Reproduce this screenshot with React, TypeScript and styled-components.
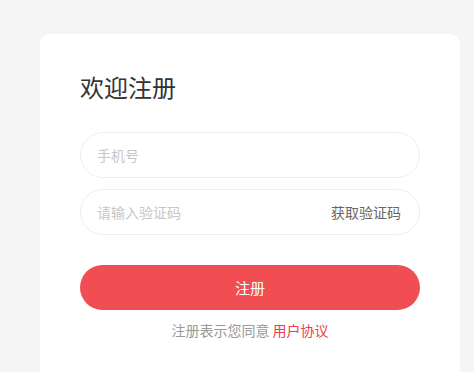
import React from "react";
import styled, { createGlobalStyle } from "styled-components";

const Global = createGlobalStyle`
  html, body {
    margin: 0;
    padding: 0;
    background: #f5f5f5;
    font-family: "Noto Sans CJK SC", "Noto Sans", sans-serif;
  }
  * { box-sizing: border-box; }
`;

const App = () => {
  return (
    <Page>
      <Global />
      <Card>
        <Title>欢迎注册</Title>
        <Field>
          <Input placeholder="手机号" />
        </Field>
        <Field gap>
          <Input placeholder="请输入验证码" />
          <CodeButton>获取验证码</CodeButton>
        </Field>
        <Submit>注册</Submit>
        <Agree>
          注册表示您同意 <Link>用户协议</Link>
        </Agree>
      </Card>
    </Page>
  );
};
export default App;

const Page = styled.div`
  min-height: 372px;
  padding: 34px 14px 0 40px;
`;

const Card = styled.div`
  width: 420px;
  min-height: 338px;
  background: #fff;
  border-radius: 10px 10px 0 0;
  padding: 36px 40px 20px;
  display: flex;
  flex-direction: column;
`;

const Title = styled.h1`
  margin: 0 0 28px;
  font-size: 24px;
  line-height: 34px;
  font-weight: 400;
  color: #333;
`;

const Field = styled.div<{ gap?: boolean }>`
  height: 46px;
  margin-top: ${({ gap }) => (gap ? "11px" : "0")};
  border: 1px solid #eeeeee;
  border-radius: 23px;
  display: flex;
  align-items: center;
  padding: 0 18px 0 16px;
`;

const Input = styled.input`
  flex: 1;
  min-width: 0;
  border: none;
  outline: none;
  padding: 0;
  background: transparent;
  font-family: inherit;
  font-size: 14px;
  color: #333;
  &::placeholder {
    color: #c6c6c6;
  }
`;

const CodeButton = styled.span`
  font-size: 14px;
  color: #666;
  cursor: pointer;
`;

const Submit = styled.button`
  margin-top: 30px;
  height: 45px;
  border: none;
  border-radius: 23px;
  background: #f04e52;
  color: #fff;
  font-family: inherit;
  font-size: 15px;
  cursor: pointer;
`;

const Agree = styled.div`
  margin-top: 10px;
  text-align: center;
  font-size: 14px;
  line-height: 20px;
  color: #999;
`;

const Link = styled.span`
  color: #e8414a;
  cursor: pointer;
`;
